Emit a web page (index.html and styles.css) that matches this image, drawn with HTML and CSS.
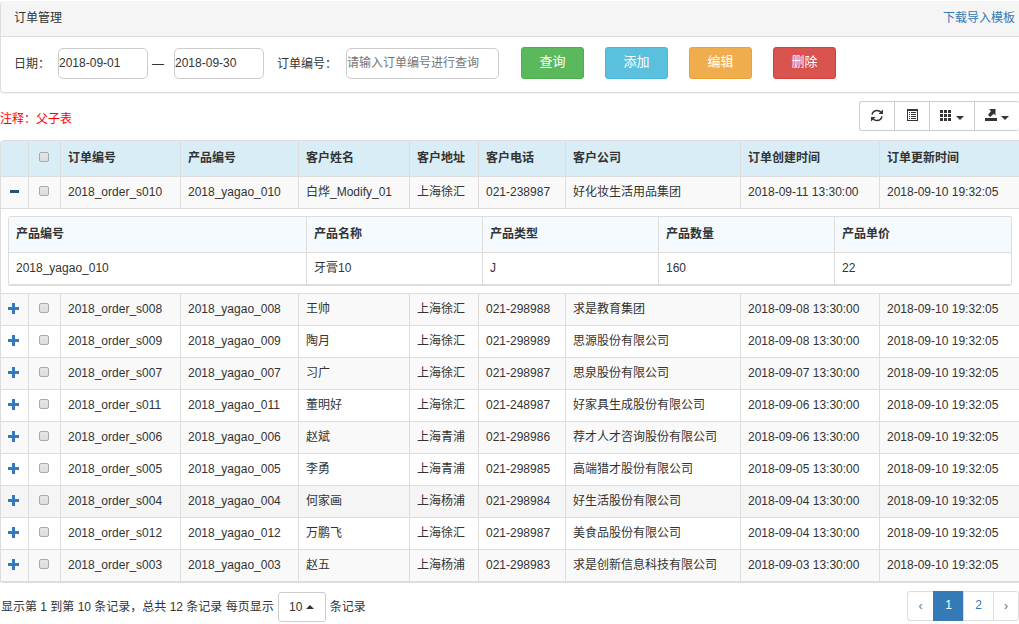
FILE: index.html
```html
<!DOCTYPE html>
<html lang="zh-CN">
<head>
<meta charset="utf-8">
<title>订单管理</title>
<link rel="stylesheet" href="styles.css">
</head>
<body>
<svg class="sprite" aria-hidden="true">
  <symbol id="plus" viewBox="0 0 12 12"><path d="M4 0h3v4h4v3H7v4H4V7H0V4h4z"/></symbol>
  <symbol id="minus" viewBox="0 0 12 12"><path d="M2 4h9v3H2z"/></symbol>
</svg>

<section class="panel">
  <header class="panel-heading">
    <span>订单管理</span>
    <a class="link" href="#">下载导入模板</a>
  </header>
  <form class="panel-body">
    <div class="dates">
      <label class="date-label" for="from">日期：</label>
      <input class="field field-date" id="from" type="text" value="2018-09-01">
      <span class="dash">—</span>
      <input class="field field-date" id="to" type="text" value="2018-09-30" aria-label="结束日期">
    </div>
    <div class="order">
      <label for="order-no">订单编号：</label>
      <input class="field field-order" id="order-no" type="text" placeholder="请输入订单编号进行查询">
    </div>
    <div class="actions">
      <button class="btn btn-success" type="button">查询</button>
      <button class="btn btn-info" type="button">添加</button>
      <button class="btn btn-warning" type="button">编辑</button>
      <button class="btn btn-danger" type="button">删除</button>
    </div>
  </form>
</section>

<div class="toolbar">
  <span class="note">注释：父子表</span>
  <div class="tools">
    <button class="tool" type="button" aria-label="刷新">
      <svg class="icon" viewBox="0 0 14 14"><path d="M2 5.600C2.600 3 4.500 1.500 7 1.500c1.700 0 3 .6 4 1.800M12 7.400c-.6 2.600-2.500 4.100-5 4.100-1.700 0-3-.6-4-1.800" fill="none" stroke="currentColor" stroke-width="1.500"/><path d="M13 .5v4.500H8.500zM1 12.500V8h4.500z"/></svg>
    </button>
    <button class="tool" type="button" aria-label="切换视图">
      <svg class="icon" viewBox="0 0 14 14"><path fill-rule="evenodd" d="M2 0h11v12H2zM3 2v9h9V2z"/><path d="M4 3h1v1H4zM6 3h5v1H6zM4 5h1v1H4zM6 5h5v1H6zM4 7h1v1H4zM6 7h5v1H6zM4 9h1v1H4zM6 9h5v1H6z"/></svg>
    </button>
    <button class="tool" type="button" aria-label="选择列">
      <svg class="icon" viewBox="0 0 14 14"><path d="M0 1h3v3H0zM4 1h3v3H4zM8 1h3v3H8zM0 5h3v3H0zM4 5h3v3H4zM8 5h3v3H8zM0 9h3v3H0zM4 9h3v3H4zM8 9h3v3H8z"/></svg>
      <span class="caret"></span>
    </button>
    <button class="tool" type="button" aria-label="导出">
      <svg class="icon" viewBox="0 0 14 14"><path d="M0 9h12v3H0zM4 0h6.500v6.500L8.800 4.800 5.200 8 3 6 6 2z"/></svg>
      <span class="caret"></span>
    </button>
  </div>
</div>

<table class="grid orders">
  <colgroup><col class="c-toggle"><col class="c-check"><col class="c-order"><col class="c-product"><col class="c-name"><col class="c-address"><col class="c-phone"><col class="c-company"><col class="c-created"><col></colgroup>
  <thead>
    <tr><th></th><th class="check"><input type="checkbox" aria-label="全选"></th><th>订单编号</th><th>产品编号</th><th>客户姓名</th><th>客户地址</th><th>客户电话</th><th>客户公司</th><th>订单创建时间</th><th>订单更新时间</th></tr>
  </thead>
  <tbody>
    <tr class="odd"><td class="toggle"><a class="open" href="#" aria-label="收起"><svg><use href="#minus"/></svg></a></td><td class="check"><input type="checkbox" aria-label="选择 s010"></td><td>2018_order_s010</td><td>2018_yagao_010</td><td>白烨_Modify_01</td><td>上海徐汇</td><td>021-238987</td><td>好化妆生活用品集团</td><td>2018-09-11 13:30:00</td><td>2018-09-10 19:32:05</td></tr>
    <tr><td class="detail" colspan="10">
      <div class="subframe">
        <table class="grid products">
          <colgroup><col class="p-id"><col class="p-col"><col class="p-col"><col class="p-col"><col></colgroup>
          <thead><tr><th>产品编号</th><th>产品名称</th><th>产品类型</th><th>产品数量</th><th>产品单价</th></tr></thead>
          <tbody><tr><td>2018_yagao_010</td><td>牙膏10</td><td>J</td><td>160</td><td>22</td></tr></tbody>
        </table>
      </div>
    </td></tr>
    <tr class="odd"><td class="toggle"><a href="#" aria-label="展开"><svg><use href="#plus"/></svg></a></td><td class="check"><input type="checkbox" aria-label="选择 s008"></td><td>2018_order_s008</td><td>2018_yagao_008</td><td>王帅</td><td>上海徐汇</td><td>021-298988</td><td>求是教育集团</td><td>2018-09-08 13:30:00</td><td>2018-09-10 19:32:05</td></tr>
    <tr><td class="toggle"><a href="#" aria-label="展开"><svg><use href="#plus"/></svg></a></td><td class="check"><input type="checkbox" aria-label="选择 s009"></td><td>2018_order_s009</td><td>2018_yagao_009</td><td>陶月</td><td>上海徐汇</td><td>021-298989</td><td>思源股份有限公司</td><td>2018-09-08 13:30:00</td><td>2018-09-10 19:32:05</td></tr>
    <tr class="odd"><td class="toggle"><a href="#" aria-label="展开"><svg><use href="#plus"/></svg></a></td><td class="check"><input type="checkbox" aria-label="选择 s007"></td><td>2018_order_s007</td><td>2018_yagao_007</td><td>习广</td><td>上海徐汇</td><td>021-298987</td><td>思泉股份有限公司</td><td>2018-09-07 13:30:00</td><td>2018-09-10 19:32:05</td></tr>
    <tr><td class="toggle"><a href="#" aria-label="展开"><svg><use href="#plus"/></svg></a></td><td class="check"><input type="checkbox" aria-label="选择 s011"></td><td>2018_order_s011</td><td>2018_yagao_011</td><td>董明好</td><td>上海徐汇</td><td>021-248987</td><td>好家具生成股份有限公司</td><td>2018-09-06 13:30:00</td><td>2018-09-10 19:32:05</td></tr>
    <tr class="odd"><td class="toggle"><a href="#" aria-label="展开"><svg><use href="#plus"/></svg></a></td><td class="check"><input type="checkbox" aria-label="选择 s006"></td><td>2018_order_s006</td><td>2018_yagao_006</td><td>赵斌</td><td>上海青浦</td><td>021-298986</td><td>荐才人才咨询股份有限公司</td><td>2018-09-06 13:30:00</td><td>2018-09-10 19:32:05</td></tr>
    <tr><td class="toggle"><a href="#" aria-label="展开"><svg><use href="#plus"/></svg></a></td><td class="check"><input type="checkbox" aria-label="选择 s005"></td><td>2018_order_s005</td><td>2018_yagao_005</td><td>李勇</td><td>上海青浦</td><td>021-298985</td><td>高端猎才股份有限公司</td><td>2018-09-05 13:30:00</td><td>2018-09-10 19:32:05</td></tr>
    <tr class="odd active"><td class="toggle"><a href="#" aria-label="展开"><svg><use href="#plus"/></svg></a></td><td class="check"><input type="checkbox" aria-label="选择 s004"></td><td>2018_order_s004</td><td>2018_yagao_004</td><td>何家画</td><td>上海杨浦</td><td>021-298984</td><td>好生活股份有限公司</td><td>2018-09-04 13:30:00</td><td>2018-09-10 19:32:05</td></tr>
    <tr><td class="toggle"><a href="#" aria-label="展开"><svg><use href="#plus"/></svg></a></td><td class="check"><input type="checkbox" aria-label="选择 s012"></td><td>2018_order_s012</td><td>2018_yagao_012</td><td>万鹏飞</td><td>上海徐汇</td><td>021-298987</td><td>美食品股份有限公司</td><td>2018-09-04 13:30:00</td><td>2018-09-10 19:32:05</td></tr>
    <tr class="odd"><td class="toggle"><a href="#" aria-label="展开"><svg><use href="#plus"/></svg></a></td><td class="check"><input type="checkbox" aria-label="选择 s003"></td><td>2018_order_s003</td><td>2018_yagao_003</td><td>赵五</td><td>上海杨浦</td><td>021-298983</td><td>求是创新信息科技有限公司</td><td>2018-09-03 13:30:00</td><td>2018-09-10 19:32:05</td></tr>
  </tbody>
</table>

<footer class="footer">
  <div class="summary">
    <span>显示第 1 到第 10 条记录，总共 12 条记录 每页显示</span>
    <button class="page-size" type="button">10<span class="caret caret-up"></span></button>
    <span>条记录</span>
  </div>
  <nav class="pages" aria-label="分页">
    <a class="page arrow" href="#">‹</a>
    <a class="page current" href="#">1</a>
    <a class="page" href="#">2</a>
    <a class="page arrow" href="#">›</a>
  </nav>
</footer>
</body>
</html>
```

FILE: styles.css
```css
* { box-sizing: border-box; }

body {
  margin: 0;
  padding-top: 1px;
  background: #fff;
  color: #333;
  font: 12px/18px "Liberation Sans", "Noto Sans CJK SC", sans-serif;
}

button, input { font: inherit; color: inherit; }
a { color: #337ab7; text-decoration: none; }
.sprite { display: none; }

/* Search panel */
.panel {
  border: solid #ddd;
  border-width: 0 0 1px 1px;
  border-radius: 4px 0 0 4px;
  box-shadow: 0 1px 1px rgba(0, 0, 0, .05);
}
.panel-heading {
  display: flex;
  justify-content: space-between;
  padding: 8px 4px 9px 13px;
  border-bottom: 1px solid #ddd;
  border-radius: 4px 0 0 0;
  background: #f5f5f5;
}
.panel-body {
  display: flex;
  align-items: flex-start;
  padding: 10px 13px 13px;
}
.dates, .order { display: flex; align-items: center; padding-top: 1px; }
.date-label { margin-right: 8px; }
.dash { margin: 0 10px 0 4px; }
.order { gap: 9px; margin: 0 22px 0 13px; }
.field {
  height: 31px;
  padding: 0 0 2px;
  border: 1px solid #ccc;
  border-radius: 5px;
  background: #fff;
}
.field::placeholder { color: #757575; opacity: 1; }
.field-date { width: 90px; }
.field-order { width: 153px; }

.actions { display: flex; gap: 21px; }
.btn {
  width: 63px;
  height: 32px;
  padding: 0 0 2px;
  border: 1px solid;
  border-radius: 3px;
  color: #fff;
  font-size: 13px;
}
.btn-success { background: #5cb85c; border-color: #4cae4c; }
.btn-info { background: #5bc0de; border-color: #46b8da; }
.btn-warning { background: #f0ad4e; border-color: #eea236; }
.btn-danger { background: #d9534f; border-color: #d43f3a; }

/* Toolbar */
.toolbar {
  display: flex;
  justify-content: space-between;
  align-items: flex-end;
  padding: 8px 0 9px;
}
.note { padding-bottom: 3px; color: #f00; }
.tools { display: flex; }
.tool {
  display: flex;
  align-items: center;
  gap: 2px;
  height: 30px;
  padding: 0 10px;
  border: solid #ccc;
  border-width: 1px 0 1px 1px;
  background: #fff;
}
.tool:first-child { border-radius: 3px 0 0 3px; }
.tool:last-child { border-radius: 0 3px 3px 0; }
.icon { width: 14px; height: 14px; fill: currentColor; }
.caret {
  border: solid transparent;
  border-width: 4px 4px 0;
  border-top-color: #333;
}
.tool .caret { margin-top: 3px; }
.caret-up { border-width: 0 4px 4px; border-bottom-color: #333; }

/* Tables */
.grid {
  width: 100%;
  table-layout: fixed;
  border-collapse: separate;
  border-spacing: 0;
  border-bottom: 1px solid #ddd;
}
.grid th, .grid td {
  height: 32px;
  padding: 0 7px 2px;
  border: solid #ddd;
  border-width: 0 0 1px 1px;
  text-align: left;
  white-space: nowrap;
}
.grid th { height: 36px; }
.orders { border-top: 1px solid #ddd; border-radius: 4px 0 0 4px; }
.orders > thead th { background: #d9edf7; }
.orders > thead th:first-child { border-top-left-radius: 4px; }
.odd { background: #f9f9f9; }
.active { background: #f5f5f5; }
.c-toggle { width: 28px; }
.c-check { width: 32px; }
.c-order { width: 120px; }
.c-product { width: 118px; }
.c-name { width: 111px; }
.c-address { width: 69px; }
.c-phone { width: 87px; }
.c-company { width: 175px; }
.c-created { width: 139px; }

.grid .toggle, .grid .check { padding: 0; text-align: center; }
.grid .toggle { padding-bottom: 1px; }
.toggle a, .toggle svg { display: block; }
.toggle svg { width: 12px; height: 12px; margin: 0 auto 0 7px; fill: #337ab7; }
.toggle .open svg { fill: #23527c; }
.check input {
  display: block;
  width: 10px;
  height: 10px;
  margin: 0 auto 4px 10px;
  appearance: none;
  border: 1px solid #aaa;
  border-radius: 2px;
  background: linear-gradient(#e6e6e6, #dcdcdc);
}

.grid .detail { padding: 7px; }
.subframe {
  border: solid #ddd;
  border-width: 1px 1px 0 0;
  border-radius: 3px;
  overflow: hidden;
}
.products th { background: #f5faff; }
.p-id { width: 298px; }
.p-col { width: 176px; }

/* Footer */
.footer { display: flex; justify-content: space-between; padding-top: 8px; }
.summary { display: flex; align-items: center; gap: 4px; padding: 1px 0 0 1px; }
.page-size {
  display: flex;
  align-items: center;
  justify-content: center;
  gap: 4px;
  width: 48px;
  height: 30px;
  padding: 0;
  border: 1px solid #ccc;
  border-radius: 3px;
  background: #fff;
}
.pages { display: flex; }
.page {
  width: 30px;
  height: 30px;
  padding-top: 4px;
  border: solid #ddd;
  border-width: 1px 0 1px 1px;
  text-align: center;
}
.arrow { width: 26px; padding-top: 5px; }
.page:first-child { border-radius: 3px 0 0 3px; }
.page:last-child { border-right-width: 1px; border-radius: 0 3px 3px 0; }
.current { background: #337ab7; border-color: #337ab7; color: #fff; }
```
